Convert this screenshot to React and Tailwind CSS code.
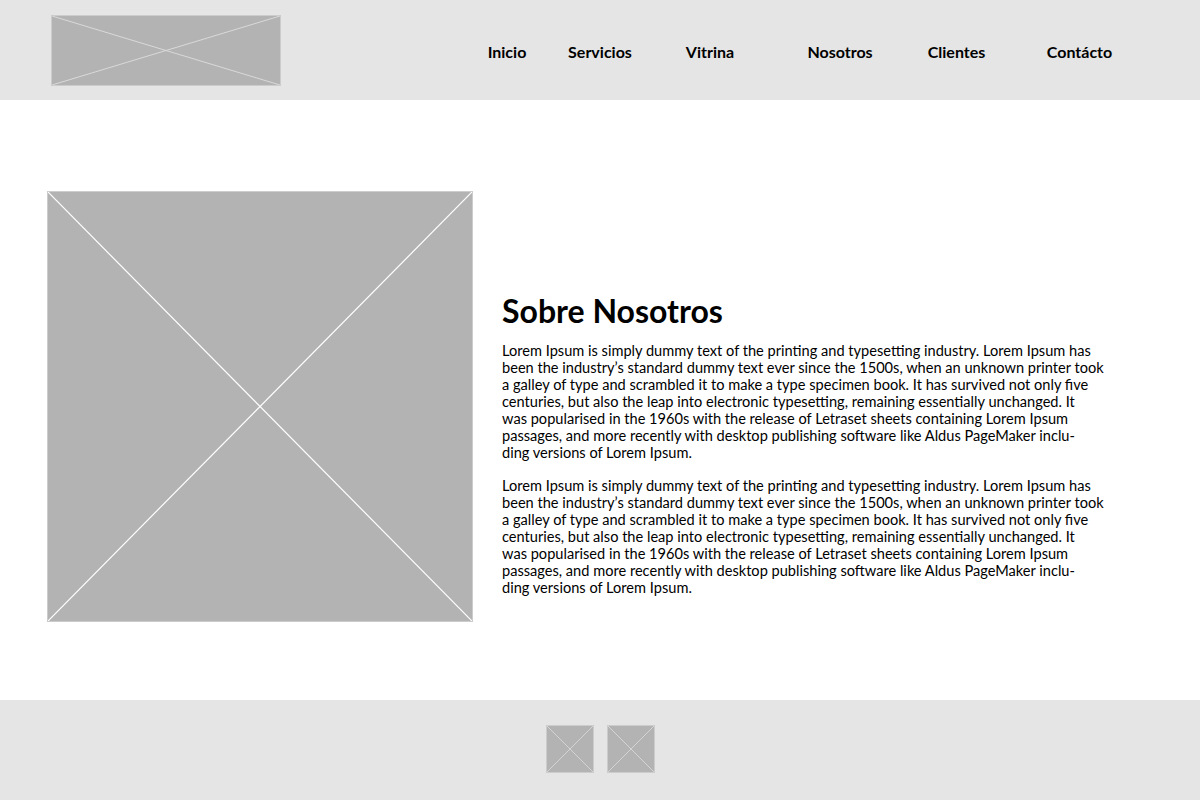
const navItems = [
  { label: "Inicio", w: "w-[94px]" },
  { label: "Servicios", w: "w-[92px]" },
  { label: "Vitrina", w: "w-[128px]" },
  { label: "Nosotros", w: "w-[132px]" },
  { label: "Clientes", w: "w-[101px]" },
  { label: "Contácto", w: "w-[145px]" },
];

const lines = [
  "Lorem Ipsum is simply dummy text of the printing and typesetting industry. Lorem Ipsum has",
  "been the industry’s standard dummy text ever since the 1500s, when an unknown printer took",
  "a galley of type and scrambled it to make a type specimen book. It has survived not only five",
  "centuries, but also the leap into electronic typesetting, remaining essentially unchanged. It",
  "was popularised in the 1960s with the release of Letraset sheets containing Lorem Ipsum",
  "passages, and more recently with desktop publishing software like Aldus PageMaker inclu-",
  "ding versions of Lorem Ipsum.",
];

function Placeholder({ className, line = "#d9d9d9", stroke = 1 }) {
  return (
    <div className={`relative bg-[#b3b3b3] border border-[#cccccc] ${className}`}>
      <svg
        className="absolute inset-0 w-full h-full"
        viewBox="0 0 100 100"
        preserveAspectRatio="none"
      >
        <line x1="0" y1="0" x2="100" y2="100" stroke={line} strokeWidth={stroke} vectorEffect="non-scaling-stroke" />
        <line x1="100" y1="0" x2="0" y2="100" stroke={line} strokeWidth={stroke} vectorEffect="non-scaling-stroke" />
      </svg>
    </div>
  );
}

function Paragraph() {
  return (
    <p className="text-[14.6px] leading-[17px] text-black">
      {lines.map((l) => (
        <span key={l} className="block whitespace-nowrap">
          {l}
        </span>
      ))}
    </p>
  );
}

export default function App() {
  return (
    <div className="w-[1200px] h-[800px] flex flex-col bg-white font-['Lato','Open_Sans',sans-serif]">
      <header className="h-[100px] bg-[#e5e5e5] flex items-start">
        <Placeholder className="ml-[51px] mt-[15px] w-[230px] h-[71px]" />
        <nav className="ml-auto mr-[48px] mt-[42px] flex">
          {navItems.map((n) => (
            <div key={n.label} className={`${n.w} text-center text-[16px] font-bold text-black leading-[20px] whitespace-nowrap`}>
              {n.label}
            </div>
          ))}
        </nav>
      </header>

      <main className="flex-1 flex items-start pl-[47px]">
        <Placeholder className="mt-[91px] w-[426px] h-[431px]" line="#ffffff" stroke={1.2} />
        <div className="ml-[29px] mt-[191px]">
          <h1 className="text-[32px] font-bold leading-[40px] text-black mb-[11px]">Sobre Nosotros</h1>
          <Paragraph />
          <div className="h-[16px]"></div>
          <Paragraph />
        </div>
      </main>

      <footer className="h-[100px] bg-[#e5e5e5] flex justify-center items-start pt-[25px] gap-[13px]">
        <Placeholder className="w-[48px] h-[48px]" line="#d4d4d4" />
        <Placeholder className="w-[48px] h-[48px]" line="#d4d4d4" />
      </footer>
    </div>
  );
}
